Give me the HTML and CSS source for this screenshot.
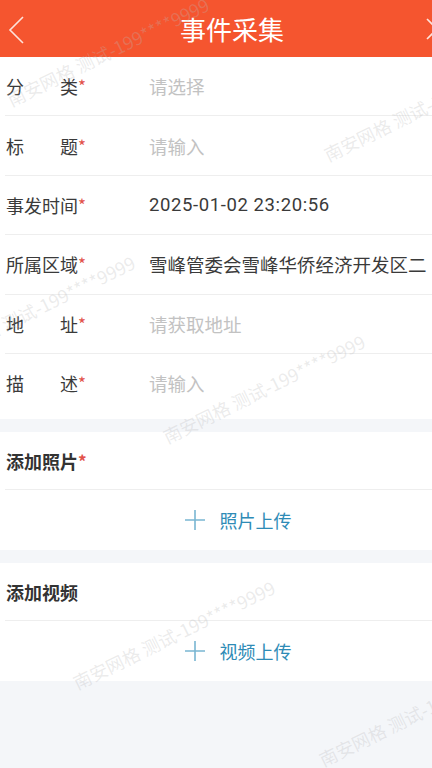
FILE: index.html
```html
<html>
<head>
	<meta charset="utf-8">
	<link rel="stylesheet" href="styles.css">
</head>
<body>
	<div class="page">
		<div class="header">
			<div class="back">
				<svg width="20" height="30" viewBox="0 0 20 30"><polyline points="16,3 3,16 16,29" fill="none" stroke="#fde3db" stroke-width="1.6"/></svg>
			</div>
			<div class="title">事件采集</div>
			<div class="close">
				<svg width="24" height="24" viewBox="0 0 24 24"><path d="M2 2 L22 22 M22 2 L2 22" fill="none" stroke="#fde3db" stroke-width="1.6"/></svg>
			</div>
		</div>

		<div class="section form">
			<div class="row">
				<span class="label"><span class="lbl">分类</span><i>*</i></span>
				<span class="value hint">请选择</span>
			</div>
			<div class="row">
				<span class="label"><span class="lbl">标题</span><i>*</i></span>
				<span class="value hint">请输入</span>
			</div>
			<div class="row">
				<span class="label"><span class="lbl">事发时间</span><i>*</i></span>
				<span class="value date">2025-01-02 23:20:56</span>
			</div>
			<div class="row">
				<span class="label"><span class="lbl">所属区域</span><i>*</i></span>
				<span class="value">雪峰管委会雪峰华侨经济开发区二</span>
			</div>
			<div class="row">
				<span class="label"><span class="lbl">地址</span><i>*</i></span>
				<span class="value hint">请获取地址</span>
			</div>
			<div class="row last">
				<span class="label"><span class="lbl">描述</span><i>*</i></span>
				<span class="value hint">请输入</span>
			</div>
		</div>

		<div class="section media">
			<div class="media-title">添加照片<i>*</i></div>
			<div class="upload">
				<svg width="20" height="20" viewBox="0 0 20 20"><path d="M10 0 V20 M0 10 H20" stroke="#79b6d2" stroke-width="1.6"/></svg>
				<span>照片上传</span>
			</div>
		</div>

		<div class="section media">
			<div class="media-title">添加视频</div>
			<div class="upload">
				<svg width="20" height="20" viewBox="0 0 20 20"><path d="M10 0 V20 M0 10 H20" stroke="#79b6d2" stroke-width="1.6"/></svg>
				<span>视频上传</span>
			</div>
		</div>

		<div class="watermarks">
			<span class="wm" style="left:8px;top:91px">南安网格 测试-199****9999</span>
			<span class="wm" style="left:325px;top:146px">南安网格 测试-199****9999</span>
			<span class="wm" style="left:-66px;top:349px">南安网格 测试-199****9999</span>
			<span class="wm" style="left:164px;top:428px">南安网格 测试-199****9999</span>
			<span class="wm" style="left:74px;top:674px">南安网格 测试-199****9999</span>
			<span class="wm" style="left:320px;top:751px">南安网格 测试-199****9999</span>
		</div>
	</div>
</body>
</html>
```

FILE: styles.css
```css
html, body {
	margin: 0;
	height: 100%;
}
body {
	background: #f4f6f9;
	font-family: "Noto Sans CJK SC", "Noto Sans", sans-serif;
	color: #333;
	overflow: hidden;
}
.page {
	position: relative;
	min-height: 100%;
	overflow: hidden;
}
.header {
	height: 57px;
	background: #f5552f;
	display: flex;
	align-items: center;
}
.back {
	width: 40px;
	padding-left: 7px;
	box-sizing: border-box;
	display: flex;
	align-items: center;
}
.title {
	flex: 1;
	text-align: center;
	padding-left: 8px;
	font-size: 26px;
	color: #fff;
	line-height: 30px;
}
.close {
	width: 42px;
	margin-right: -26px;
	display: flex;
	justify-content: center;
}
.section {
	background: #fff;
}
.form {
	padding-bottom: 7px;
	margin-bottom: 13px;
}
.row {
	height: 58.4px;
	margin-left: 5px;
	padding-left: 1px;
	border-bottom: 1px solid #eeeeee;
	display: flex;
	align-items: center;
	font-size: 18px;
}
.row.last {
	border-bottom: none;
}
.label {
	width: 143px;
	flex-shrink: 0;
	color: #3a3a3a;
	white-space: nowrap;
}
.lbl {
	display: inline-block;
	width: 72px;
	text-align: justify;
	text-align-last: justify;
}
i {
	font-style: normal;
	color: #e2514a;
	font-size: 17px;
	vertical-align: 1px;
}
.value {
	white-space: nowrap;
	color: #3a3a3a;
	font-family: Roboto, "Noto Sans CJK SC", sans-serif;
	font-size: 18.5px;
}
.date {
	letter-spacing: 0.6px;
}
.hint {
	color: #c2c2c2;
}
.media {
	margin-bottom: 13px;
}
.media-title {
	height: 57px;
	margin-left: 5px;
	padding-left: 1px;
	border-bottom: 1px solid #eeeeee;
	display: flex;
	align-items: center;
	font-size: 18px;
	font-weight: bold;
	color: #333;
}
.upload {
	height: 60px;
	display: flex;
	align-items: center;
	justify-content: center;
	gap: 15px;
	padding-left: 44px;
	font-size: 18px;
	color: #2e8bb6;
}
.watermarks {
	position: absolute;
	left: 0;
	top: 0;
	right: 0;
	bottom: 0;
	pointer-events: none;
}
.wm {
	position: absolute;
	white-space: nowrap;
	font-size: 18px;
	line-height: 18px;
	color: rgba(185, 185, 185, 0.28);
	transform: rotate(-26deg);
	transform-origin: 0 50%;
}
```
